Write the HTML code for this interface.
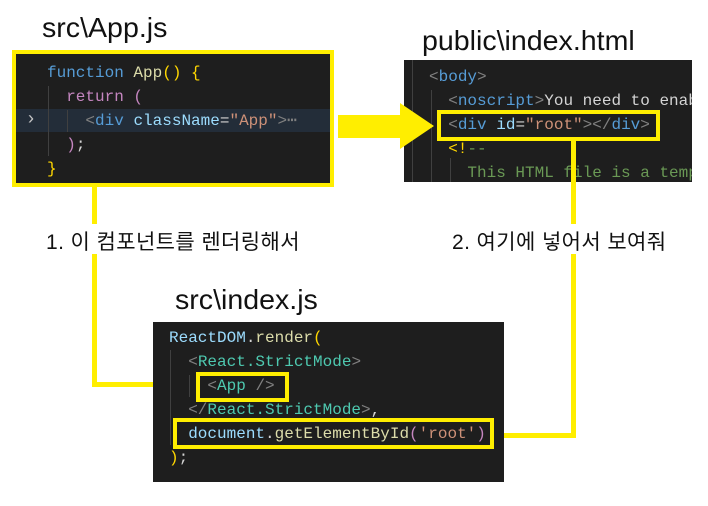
<!DOCTYPE html>
<html><head><meta charset="utf-8"><style>
*{margin:0;padding:0;box-sizing:border-box}
body{width:708px;height:506px;background:#fff;position:relative;overflow:hidden;font-family:"Liberation Sans","Noto Sans CJK KR",sans-serif}
.a{position:absolute}
.t{font-size:28px;color:#111;line-height:1;transform-origin:0 0;transform:scaleX(1.02)}
.code{font-family:"Liberation Mono",monospace;font-size:16px;white-space:pre;line-height:24px}
.dark{background:#1e1e1e}
.y{background:#ffee00}
.yb{border:4px solid #ffee00}
.kw{color:#569cd6}.fn{color:#dcdcaa}.br{color:#ffd700}.pk{color:#c586c0}
.g{color:#808080}.tg{color:#569cd6}.at{color:#9cdcfe}.st{color:#ce9178}.wh{color:#d4d4d4}
.cm{color:#6a9955}.cp{color:#4ec9b0}
.gl{position:absolute;width:1px;background:#404040}
.lbl{font-size:21px;color:#111;letter-spacing:0.4px}
</style></head><body>
<div class="a t" style="left:42px;top:14px">src\App.js</div>
<div class="a t" style="left:422px;top:27px">public\index.html</div>
<div class="a t" style="left:175px;top:286px">src\index.js</div>

<div class="a dark yb" style="left:12px;top:50px;width:322px;height:137px"></div>
<div class="a" style="left:16px;top:109px;width:314px;height:23px;background:#232d39"></div>
<div class="gl" style="left:48px;top:86px;height:70px"></div>
<div class="gl" style="left:67px;top:110px;height:22px"></div>
<div class="a code" style="left:47px;top:61px"><span class="kw">function</span> <span class="fn">App</span><span class="br">()</span> <span class="br">{</span>
  <span class="pk">return</span> <span class="pk">(</span>
    <span class="g">&lt;</span><span class="tg">div</span> <span class="at">className</span><span class="wh">=</span><span class="st">"App"</span><span class="g">&gt;</span><span class="g">⋯</span>
  <span class="pk">)</span><span class="wh">;</span>
<span class="br">}</span></div>
<div class="a" style="left:28px;top:108px;color:#c5c5c5;font-size:18px">›</div>

<div class="a dark" style="left:404px;top:60px;width:288px;height:122px;overflow:hidden">
<div class="gl" style="left:8px;top:0;height:122px"></div>
<div class="gl" style="left:27px;top:30px;height:92px"></div>
<div class="a code" style="left:25px;top:5px"><span class="g">&lt;</span><span class="tg">body</span><span class="g">&gt;</span>
  <span class="g">&lt;</span><span class="tg">noscript</span><span class="g">&gt;</span><span class="wh">You need to enable</span>
  <span class="g">&lt;</span><span class="tg">div</span> <span class="at">id</span><span class="wh">=</span><span class="st">"root"</span><span class="g">&gt;&lt;/</span><span class="tg">div</span><span class="g">&gt;</span>
  <span class="br">&lt;!</span><span class="cm">--</span>
    <span class="cm">This HTML file is a template</span></div>
</div>
<div class="gl" style="left:450px;top:158px;height:24px"></div>
<div class="a yb" style="left:437px;top:110px;width:223px;height:31px"></div>

<svg class="a" style="left:336px;top:100px" width="102" height="52"><polygon points="2,15 64,15 64,3 98,26 64,49 64,38 2,38" fill="#ffee00"/></svg>

<div class="a y" style="left:92px;top:187px;width:5px;height:200px"></div>
<div class="a y" style="left:92px;top:382px;width:106px;height:5px"></div>
<div class="a y" style="left:571px;top:141px;width:5px;height:297px"></div>
<div class="a y" style="left:494px;top:433px;width:82px;height:5px"></div>

<div class="a" style="left:44px;top:224px;width:262px;height:30px;background:#fff"></div>
<div class="a lbl" style="left:46px;top:226px">1. 이 컴포넌트를 렌더링해서</div>
<div class="a" style="left:450px;top:224px;width:225px;height:30px;background:#fff"></div>
<div class="a lbl" style="left:452px;top:226px">2. 여기에 넣어서 보여줘</div>

<div class="a dark" style="left:153px;top:322px;width:351px;height:160px"></div>
<div class="gl" style="left:170px;top:350px;height:95px"></div>
<div class="gl" style="left:189px;top:375px;height:22px"></div>
<div class="a code" style="left:169px;top:326px"><span class="at">ReactDOM</span><span class="wh">.</span><span class="fn">render</span><span class="br">(</span>
  <span class="g">&lt;</span><span class="cp">React.StrictMode</span><span class="g">&gt;</span>
    <span class="g">&lt;</span><span class="cp">App</span> <span class="g">/&gt;</span>
  <span class="g">&lt;/</span><span class="cp">React.StrictMode</span><span class="g">&gt;</span><span class="wh">,</span>
  <span class="at">document</span><span class="wh">.</span><span class="fn">getElementById</span><span class="pk">(</span><span class="st">'root'</span><span class="pk">)</span>
<span class="br">)</span><span class="wh">;</span></div>
<div class="a yb" style="left:196px;top:372px;width:93px;height:30px"></div>
<div class="a yb" style="left:173px;top:418px;width:321px;height:31px"></div>
</body></html>
